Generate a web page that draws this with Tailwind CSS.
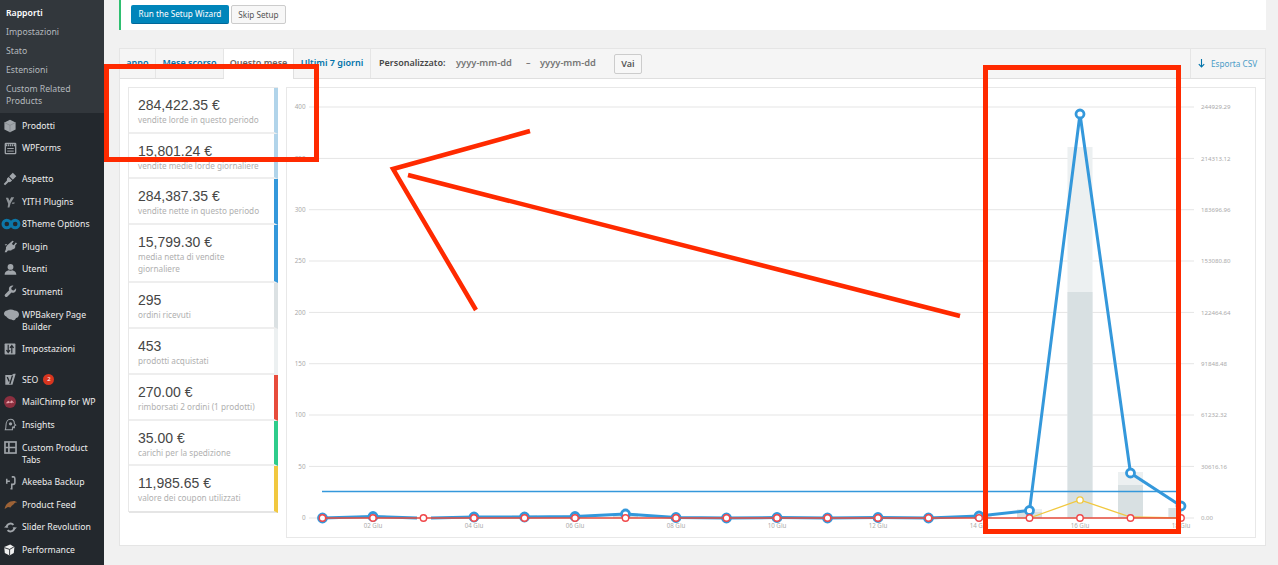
<!DOCTYPE html>
<html lang="en">
<head>
    <meta charset="UTF-8" />
    <title>Rapporti</title>
    <script src="https://cdn.jsdelivr.net/npm/@tailwindcss/browser@4"></script>
</head>
<body class="relative h-[565px] overflow-hidden flex bg-[#f1f1f1] font-['Noto_Sans',sans-serif] text-[9px] text-[#444]">

<!-- Sidebar -->
<aside class="w-[104px] h-[565px] shrink-0 overflow-hidden bg-[#23282d] text-[#eeeeee] text-[8.7px] leading-[12px]">
    <nav class="bg-[#32373c] pt-[3px] pb-[3px] mb-[1.5px] text-[#b4b9be]">
        <a class="block px-[6px] py-[3.5px] font-semibold text-white">Rapporti</a>
        <a class="block px-[6px] py-[3.5px]">Impostazioni</a>
        <a class="block px-[6px] py-[3.5px]">Stato</a>
        <a class="block px-[6px] py-[3.5px]">Estensioni</a>
        <a class="block px-[6px] py-[3.5px]">Custom Related Products</a>
    </nav>

    <a class="flex py-[5.3px]">
        <span class="w-[22px] h-[12px] shrink-0 flex items-center justify-center pr-[2px]">
            <svg class="w-[14px] h-[14px]" viewBox="0 0 20 20"><path fill="#a0a5aa" d="M10 1l8 4v10l-8 4-8-4V5z"/><path fill="none" stroke="#7f858a" d="M2 5l8 4 8-4M10 9v10"/></svg>
        </span>
        <span>Prodotti</span>
    </a>
    <a class="flex py-[5.3px]">
        <span class="w-[22px] h-[12px] shrink-0 flex items-center justify-center pr-[2px]">
            <svg class="w-[13px] h-[13px]" viewBox="0 0 20 20"><rect x="2" y="2" width="16" height="16" rx="1" fill="none" stroke="#a0a5aa" stroke-width="2"/><path stroke="#a0a5aa" stroke-width="3" stroke-dasharray="2 1" d="M3 5h14"/><path stroke="#a0a5aa" stroke-width="1.5" d="M5 10h10M5 14h10"/></svg>
        </span>
        <span>WPForms</span>
    </a>

    <a class="flex py-[5.3px] mt-[8px]">
        <span class="w-[22px] h-[12px] shrink-0 flex items-center justify-center pr-[2px]">
            <svg class="w-[14px] h-[14px]" viewBox="0 0 20 20"><path fill="#a0a5aa" d="M14 1l5 5-5 5-5-5zM8 7l5 5-2 2c-1 .6-2 .6-3 .4L3 19l-2-2 4.600-5c-.2-1 0-2 .4-3z"/></svg>
        </span>
        <span>Aspetto</span>
    </a>
    <a class="flex py-[5.3px]">
        <span class="w-[22px] h-[12px] shrink-0 flex items-center justify-center pr-[2px]">
            <svg class="w-[12px] h-[12px]" viewBox="0 0 20 20"><path fill="#8d9297" d="M3 3h4l2 5 3-6h5l-6 10-2 7H6l1-6zM14 11h4l-1 2h-4z"/></svg>
        </span>
        <span>YITH Plugins</span>
    </a>
    <a class="flex py-[5.3px]">
        <span class="w-[22px] h-[12px] shrink-0 flex items-center justify-center">
            <svg class="w-[20px] h-[12px]" viewBox="0 0 20 12"><circle cx="5.800" cy="6" r="3.800" fill="none" stroke="#0d77a8" stroke-width="3"/><circle cx="14.200" cy="6" r="3.800" fill="none" stroke="#0d77a8" stroke-width="3"/></svg>
        </span>
        <span>8Theme Options</span>
    </a>
    <a class="flex py-[5.3px]">
        <span class="w-[22px] h-[12px] shrink-0 flex items-center justify-center pr-[2px]">
            <svg class="w-[13px] h-[13px]" viewBox="0 0 20 20"><path fill="#a0a5aa" d="M13 1l2 1-3 4 3 2 3-4 2 1-3 4c1 2 0 4-2 5l-3 1-1 1H6l-2 3H1l2-5v-3l2-3zM1 7l4-1-2 3z"/></svg>
        </span>
        <span>Plugin</span>
    </a>
    <a class="flex py-[5.3px]">
        <span class="w-[22px] h-[12px] shrink-0 flex items-center justify-center pr-[2px]">
            <svg class="w-[13px] h-[13px]" viewBox="0 0 20 20"><circle cx="10" cy="6" r="4.500" fill="#a0a5aa"/><path fill="#a0a5aa" d="M1 18c0-5 4-6 6-7 2 1 4 1 6 0 2 1 6 2 6 7z"/></svg>
        </span>
        <span>Utenti</span>
    </a>
    <a class="flex py-[5.3px]">
        <span class="w-[22px] h-[12px] shrink-0 flex items-center justify-center pr-[2px]">
            <svg class="w-[13px] h-[13px]" viewBox="0 0 20 20"><path fill="#a0a5aa" d="M18.500 5l-3.500 3.500-3-1-1-3L14.500 1c-3.500-1-7 1.500-7 5 0 .8.100 1.400.4 2L1.500 14.500a2.500 2.500 0 003.500 3.500l6.500-6.500c.6.200 1.300.4 2 .4 3.500 0 6-3.500 5-7z"/></svg>
        </span>
        <span>Strumenti</span>
    </a>
    <a class="flex py-[5.3px]">
        <span class="w-[22px] h-[12px] shrink-0 flex items-center justify-center">
            <svg class="w-[15px] h-[12px]" viewBox="0 0 20 16"><path fill="#a0a5aa" d="M4 2c3-2 7-2 10 0 3 0 6 2 6 5s-2 5-4 5c-1 3-4 4-6 2-3 0-6-2-7-4-2-1-3-2-3-4s2-4 4-4z"/></svg>
        </span>
        <span>WPBakery Page Builder</span>
    </a>
    <a class="flex py-[5.3px]">
        <span class="w-[22px] h-[12px] shrink-0 flex items-center justify-center pr-[2px]">
            <svg class="w-[12px] h-[12px]" viewBox="0 0 20 20"><rect x="1" y="1" width="18" height="18" rx="1" fill="#a0a5aa"/><path fill="none" stroke="#23282d" stroke-width="2" d="M7 3v13M4 12l3 4 3-4M13 17V4M10 8l3-4 3 4"/></svg>
        </span>
        <span>Impostazioni</span>
    </a>

    <a class="flex py-[5.3px] mt-[8px]">
        <span class="w-[22px] h-[12px] shrink-0 flex items-center justify-center pr-[2px]">
            <svg class="w-[13px] h-[13px]" viewBox="0 0 20 20"><path fill="#a0a5aa" d="M2 3h10l3-2h3l-5 17H2z"/><path fill="none" stroke="#23282d" stroke-width="2" d="M5 6l3 7M13 4l-4 13"/></svg>
        </span>
        <span class="flex items-center gap-[5px]">SEO <span class="w-[11px] h-[11px] rounded-full bg-[#d8351f] text-white text-[6px] leading-[11px] text-center">2</span></span>
    </a>
    <a class="flex py-[5.3px]">
        <span class="w-[22px] h-[12px] shrink-0 flex items-center justify-center pr-[2px]">
            <svg class="w-[12px] h-[12px]" viewBox="0 0 20 20"><circle cx="10" cy="10" r="10" fill="#8c2f3f"/><path fill="#e6a0a8" d="M3 12l4-4 3 2 3-3 4 5-3-1-2 1-2-1-3 1z"/></svg>
        </span>
        <span class="whitespace-nowrap">MailChimp for WP</span>
    </a>
    <a class="flex py-[5.3px]">
        <span class="w-[22px] h-[12px] shrink-0 flex items-center justify-center pr-[2px]">
            <svg class="w-[13px] h-[13px]" viewBox="0 0 20 20"><path fill="none" stroke="#a0a5aa" stroke-width="1.600" d="M2 18c1-2 1-4 1-6 0-6 3-10 7-10s6 3 6 7l2 2-2 1v3h-3v3z"/><circle cx="10" cy="9" r="2.500" fill="#a0a5aa"/><circle cx="14" cy="14" r="1.500" fill="#a0a5aa"/></svg>
        </span>
        <span>Insights</span>
    </a>
    <a class="flex py-[5.3px]">
        <span class="w-[22px] h-[12px] shrink-0 flex items-center justify-center pr-[2px]">
            <svg class="w-[13px] h-[13px]" viewBox="0 0 20 20"><rect x="1.500" y="1.500" width="17" height="17" fill="none" stroke="#a0a5aa" stroke-width="2.500"/><path stroke="#a0a5aa" stroke-width="2.500" d="M2 10h16M7.500 2v16"/></svg>
        </span>
        <span>Custom Product Tabs</span>
    </a>
    <a class="flex py-[5.3px]">
        <span class="w-[22px] h-[12px] shrink-0 flex items-center justify-center pr-[2px]">
            <svg class="w-[13px] h-[15px]" viewBox="0 0 20 24"><path fill="none" stroke="#a0a5aa" stroke-width="2.500" d="M4 6v8M4 10h5M12 3h3c2 0 2 2 2 3v6c0 2-1 3-3 3h-2v7h-2"/></svg>
        </span>
        <span>Akeeba Backup</span>
    </a>
    <a class="flex py-[5.3px]">
        <span class="w-[22px] h-[12px] shrink-0 flex items-center justify-center pr-[2px]">
            <svg class="w-[13px] h-[10px]" viewBox="0 0 20 14"><path fill="#9c6236" d="M1 13C2 6 8 1 15 1c2 0 4 1 5 2-3 0-4 1-5 3l-3 2-2 3-4-1z"/></svg>
        </span>
        <span>Product Feed</span>
    </a>
    <a class="flex py-[5.3px]">
        <span class="w-[22px] h-[12px] shrink-0 flex items-center justify-center pr-[2px]">
            <svg class="w-[13px] h-[13px]" viewBox="0 0 20 20"><path fill="none" stroke="#a0a5aa" stroke-width="3" d="M4 10a6 6 0 0110.500-4M16 10a6 6 0 01-10.500 4"/><path fill="#a0a5aa" d="M0 10h7l-3.500-3zM20 10h-7l3.500 3z"/></svg>
        </span>
        <span>Slider Revolution</span>
    </a>
    <a class="flex py-[5.3px]">
        <span class="w-[22px] h-[12px] shrink-0 flex items-center justify-center pr-[4px]">
            <svg class="w-[12px] h-[12px]" viewBox="0 0 20 20"><path fill="#eeeeee" d="M2 5l10-4 7 4-1 10-7 4-8-4z"/><path fill="none" stroke="#23282d" stroke-width="1.500" d="M2 6l9 3 7-4M11 9v10"/></svg>
        </span>
        <span>Performance</span>
    </a>
</aside>

<!-- Main content -->
<main class="flex-1 pl-[15px] pr-[12px]">

    <!-- Setup notice -->
    <div class="h-[30px] mb-[18px] bg-white border-l-[2px] border-[#2fbf71] pl-[10px] pt-[5px] flex gap-[2px] items-start">
        <button class="h-[19px] w-[98px] rounded-[2px] bg-[#0085ba] border-b border-[#006799] text-white text-[8.2px] leading-[18px]">Run the Setup Wizard</button>
        <button class="h-[19px] w-[55px] rounded-[2px] bg-[#f7f7f7] border border-[#cccccc] text-[#555555] text-[8.2px] leading-[16px]">Skip Setup</button>
    </div>

    <!-- Report panel -->
    <section class="h-[498px] bg-white border border-[#e5e5e5]">

        <!-- Tabs -->
        <div class="h-[30px] bg-[#f5f5f5] border-b border-[#dfdfdf] flex items-stretch text-[9px] font-semibold text-[#0073aa] leading-[28px]">
            <a class="w-[36px] text-center border-r border-[#e5e5e5]">anno</a>
            <a class="w-[68px] text-center border-r border-[#e5e5e5]">Mese scorso</a>
            <a class="w-[70px] h-[30px] text-center bg-white text-[#666666] border-r border-[#dfdfdf]">Questo mese</a>
            <a class="w-[77px] text-center border-r border-[#e5e5e5]">Ultimi 7 giorni</a>
            <span class="ml-[8px] w-[77px] text-[#464646]">Personalizzato:</span>
            <span class="w-[70px] text-[9.3px] text-[#777777]">yyyy-mm-dd</span>
            <span class="w-[14px] text-[#777777]">–</span>
            <span class="w-[74px] text-[9.3px] text-[#777777]">yyyy-mm-dd</span>
            <button class="self-center w-[28px] h-[20px] rounded-[2px] bg-[#f7f7f7] border border-[#cccccc] text-[#555555] text-[9px] leading-[17px] font-semibold">Vai</button>
            <a class="ml-auto w-[75px] border-l border-[#e5e5e5] flex items-center gap-[6px] pl-[7px] text-[8.2px] font-normal text-[#4a9cc7]">
                <svg class="w-[7px] h-[9px]" viewBox="0 0 7 9"><path fill="none" stroke="#0073aa" stroke-width="1.100" d="M3.500 0v8M.8 5.200l2.700 2.800 2.700-2.800"/></svg>
                <span>Esporta CSV</span>
            </a>
        </div>

        <div class="flex gap-[8px] pl-[8px] pt-[8px]">
            <!-- Stats list -->
            <ul class="w-[150px] h-[425px] border-t border-l border-[#e8e8e8] font-['Liberation_Sans',sans-serif]">
                <li class="h-[46px] border-b-2 border-r-[4px] border-b-[#eeeeee] border-r-[#b1d4ea] pl-[9px] pt-[9px]">
                    <p class="text-[14px] leading-[17px] text-[#464646]">284,422.35 €</p>
                    <p class="font-['Noto_Sans',sans-serif] text-[8.2px] leading-[12px] text-[#b0b0b0] whitespace-nowrap">vendite lorde in questo periodo</p>
                </li>
                <li class="h-[45px] border-b-2 border-r-[4px] border-b-[#eeeeee] border-r-[#b1d4ea] pl-[9px] pt-[9px]">
                    <p class="text-[14px] leading-[17px] text-[#464646]">15,801.24 €</p>
                    <p class="font-['Noto_Sans',sans-serif] text-[8.2px] leading-[12px] text-[#b0b0b0] whitespace-nowrap">vendite medie lorde giornaliere</p>
                </li>
                <li class="h-[46px] border-b-2 border-r-[4px] border-b-[#eeeeee] border-r-[#3498db] pl-[9px] pt-[9px]">
                    <p class="text-[14px] leading-[17px] text-[#464646]">284,387.35 €</p>
                    <p class="font-['Noto_Sans',sans-serif] text-[8.2px] leading-[12px] text-[#b0b0b0] whitespace-nowrap">vendite nette in questo periodo</p>
                </li>
                <li class="h-[58px] border-b-2 border-r-[4px] border-b-[#eeeeee] border-r-[#3498db] pl-[9px] pt-[9px]">
                    <p class="text-[14px] leading-[17px] text-[#464646]">15,799.30 €</p>
                    <p class="font-['Noto_Sans',sans-serif] text-[8.2px] leading-[12px] text-[#b0b0b0] w-[100px]">media netta di vendite giornaliere</p>
                </li>
                <li class="h-[46px] border-b-2 border-r-[4px] border-b-[#eeeeee] border-r-[#dbe1e3] pl-[9px] pt-[9px]">
                    <p class="text-[14px] leading-[17px] text-[#464646]">295</p>
                    <p class="font-['Noto_Sans',sans-serif] text-[8.2px] leading-[12px] text-[#b0b0b0] whitespace-nowrap">ordini ricevuti</p>
                </li>
                <li class="h-[46px] border-b-2 border-r-[4px] border-b-[#eeeeee] border-r-[#ecf0f1] pl-[9px] pt-[9px]">
                    <p class="text-[14px] leading-[17px] text-[#464646]">453</p>
                    <p class="font-['Noto_Sans',sans-serif] text-[8.2px] leading-[12px] text-[#b0b0b0] whitespace-nowrap">prodotti acquistati</p>
                </li>
                <li class="h-[46px] border-b-2 border-r-[4px] border-b-[#eeeeee] border-r-[#e74c3c] pl-[9px] pt-[9px]">
                    <p class="text-[14px] leading-[17px] text-[#464646]">270.00 €</p>
                    <p class="font-['Noto_Sans',sans-serif] text-[8.2px] leading-[12px] text-[#b0b0b0] whitespace-nowrap">rimborsati 2 ordini (1 prodotti)</p>
                </li>
                <li class="h-[45px] border-b-2 border-r-[4px] border-b-[#eeeeee] border-r-[#2ecc8b] pl-[9px] pt-[9px]">
                    <p class="text-[14px] leading-[17px] text-[#464646]">35.00 €</p>
                    <p class="font-['Noto_Sans',sans-serif] text-[8.2px] leading-[12px] text-[#b0b0b0] whitespace-nowrap">carichi per la spedizione</p>
                </li>
                <li class="h-[47px] border-b-2 border-r-[4px] border-b-[#e5e5e5] border-r-[#f1c83f] pl-[9px] pt-[9px]">
                    <p class="text-[14px] leading-[17px] text-[#464646]">11,985.65 €</p>
                    <p class="font-['Noto_Sans',sans-serif] text-[8.2px] leading-[12px] text-[#b0b0b0] whitespace-nowrap">valore dei coupon utilizzati</p>
                </li>
            </ul>

            <!-- Chart -->
            <div class="w-[970px] h-[451px] border border-[#e8e8e8]">
                <svg id="chart" class="block w-[968px] h-[449px]" viewBox="287 88 968 449"></svg>
            </div>
        </div>
    </section>
</main>

<!-- Red annotations drawn over the screenshot -->
<svg class="absolute left-0 top-0 w-[1278px] h-[565px] pointer-events-none" viewBox="0 0 1278 565" fill="none" stroke="#ff2a00" stroke-width="5">
    <rect x="106.500" y="66.500" width="210" height="93"/>
    <rect x="985.500" y="67.500" width="193" height="464"/>
    <path stroke-width="4.500" d="M530 131L393 169 476 310M408 175L960 316"/>
</svg>

<script>
    const svg = document.getElementById("chart");
    const step = 50.5;
    const xAt = (i) => 322.5 + step * i;

    const gridY = [107, 158.4, 209.7, 261, 312.4, 363.7, 415, 466.4, 518];
    const left = [400, 350, 300, 250, 200, 150, 100, 50, 0];
    const right = ["244929.29", "214313.12", "183696.96", "153080.80", "122464.64", "91848.48", "61232.32", "30616.16", "0.00"];

    // top of the light and dark bar for each day
    const light = [518, 515, 518, 517, 515, 515, 513, 517, 518, 517, 518, 517, 518, 515, 509, 147, 472, 508];
    const dark = [518, 517, 518, 518, 517, 517, 516, 518, 518, 518, 518, 518, 518, 517, 512, 292, 485, 508];
    const net = [518, 516.5, 518, 517, 517, 516.5, 514, 517.5, 518, 517.5, 518, 517.5, 518, 516, 510.5, 114, 473, 506];

    let out = "";
    gridY.forEach((y, i) => {
        out += `<path d="M309 ${y}H1194" stroke="#e5e5e5" stroke-width="1"/>`;
        out += `<text x="305.500" y="${y + 2.2}" text-anchor="end" font-size="6.300" fill="#aaaaaa">${left[i]}</text>`;
        out += `<text x="1201" y="${y + 2.2}" font-size="6.100" fill="#aaaaaa">${right[i]}</text>`;
    });

    light.forEach((top, i) => {
        const w = i === 17 ? 13 : 25;
        if (top < 518) out += `<rect x="${xAt(i) - 12.5}" y="${top}" width="${w}" height="${518 - top}" fill="#ecf0f1"/>`;
        if (dark[i] < 518) out += `<rect x="${xAt(i) - 12.5}" y="${dark[i]}" width="${w}" height="${518 - dark[i]}" fill="#d8e0e2"/>`;
    });

    for (let i = 1; i < 18; i += 2) {
        const day = String(i + 1).padStart(2, "0");
        out += `<text x="${xAt(i)}" y="527.500" text-anchor="middle" font-size="6.200" fill="#aaaaaa">${day} Giu</text>`;
    }

    out += `<path d="M322 491.500H1180" stroke="#3498db" stroke-width="1.300"/>`;
    out += `<path d="M${xAt(14)} 518L${xAt(15)} 500 ${xAt(16)} 517 ${xAt(17)} 518" fill="none" stroke="#f1c83f" stroke-width="1.300"/>`;
    out += `<circle cx="${xAt(15)}" cy="500" r="3.200" fill="#fff" stroke="#f1c83f" stroke-width="1.300"/>`;

    // the net line is not drawn around the third day, only the red one shows there
    out += `<path d="M322.500 518L${xAt(1)} 516.500 417 518M431 518L` + net.slice(3).map((y, i) => `${xAt(i + 3)} ${y}`).join(" ") + `" fill="none" stroke="#3498db" stroke-width="3"/>`;
    net.forEach((y, i) => {
        if (i !== 2) out += `<circle cx="${xAt(i)}" cy="${y}" r="4" fill="#fff" stroke="#3498db" stroke-width="2.800"/>`;
    });

    out += `<path d="M322.500 518H${xAt(17)}" stroke="#e74c3c" stroke-width="1.500"/>`;
    for (let i = 0; i < 18; i++) {
        out += `<circle cx="${xAt(i)}" cy="518" r="3.200" fill="#fff" stroke="#f0474a" stroke-width="1.400"/>`;
    }
    svg.innerHTML = out;
</script>

</body>
</html>
